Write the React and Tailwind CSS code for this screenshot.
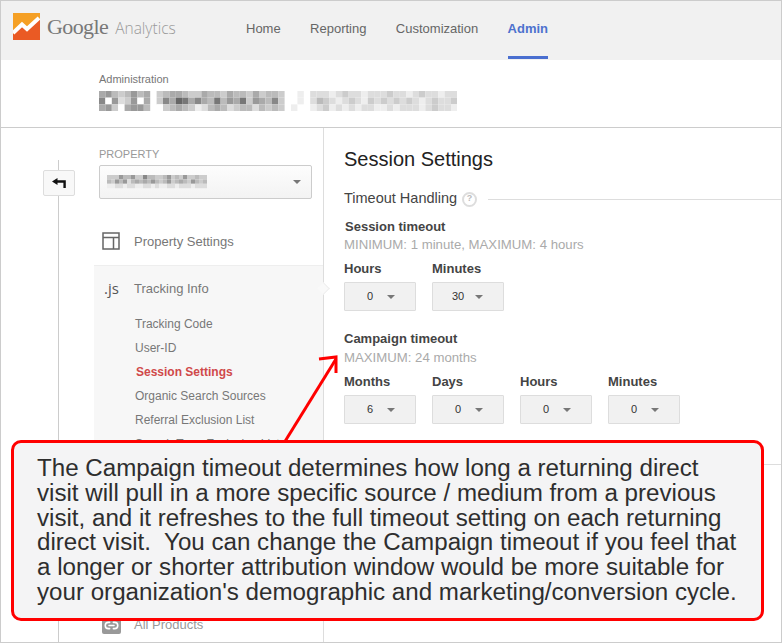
import React from 'react';
import { Link2 } from 'lucide-react';

// pixelated account name, one string of grey levels per row
const titleMosaic = [
  'a9bcb9ba cbaabccabbcabbcacbbc  e dddedcddedddcddedcddedd',
  '8f9dc9fa c8a67a8ab7b9a7c9ab8c  e dbcdedcdecdcdcdcdedcddc',
  'a9cfa99b fcbabcedbabdcbbdbcbc e  edcedededdeededddedcdde',
];

const propertyMosaic = [
  'ccc9bb9cc8bbccb9cbc9ccbcc',
  'bc9b9dbabab9bcb9cbabc9bcb',
  'eeddeddeeddedeeddedddeddd',
];

function Mosaic({ rows, cellW, cellH, className }) {
  const width = rows[0].length * cellW;
  const height = rows.length * cellH;
  return (
    <svg width={width} height={height} className={className}>
      {rows.map((row, r) =>
        row.split('').map((c, i) =>
          c === ' ' ? null : (
            <rect key={r + '-' + i} x={i * cellW} y={r * cellH} width={cellW} height={cellH} fill={'#' + c + c + c + c + c + c} />
          )
        )
      )}
    </svg>
  );
}

function Caret({ className = '' }) {
  return <span className={'w-0 h-0 border-x-[4px] border-x-transparent border-t-[4px] border-t-[#777] ' + className} />;
}

function Stepper({ label, value }) {
  return (
    <div className="w-[72px]">
      <div className="text-[13px] leading-[15px] font-bold text-[#444]">{label}</div>
      <div className="mt-[6px] h-[29px] bg-[#f1f1f1] border border-[#ddd] rounded-[1px] flex items-center">
        <span className="w-[50px] text-center text-[11px] text-[#333]">{value}</span>
        <Caret className="-ml-[8px]" />
      </div>
    </div>
  );
}

function SubLink({ children, active }) {
  return (
    <div className={'h-[24px] leading-[24px] text-[12px] ' + (active ? 'font-bold text-[#d0494a] pl-px' : 'text-[#777]')}>
      {children}
    </div>
  );
}

export default function App() {
  return (
    <div className="relative w-[782px] h-[643px] overflow-hidden bg-white border border-[#ccc] font-['Liberation_Sans',Arial,sans-serif]">
      {/* Top nav */}
      <header className="h-[58px] bg-[#f1f1f1] flex">
        <div className="flex items-start w-[245px] pl-[12px] pt-[12px]">
          <svg width="27" height="27" viewBox="0 0 27 27" className="shrink-0">
            <rect width="27" height="27" fill="#f5a025" />
            <path d="M0 27V21L9 13L14 18L27 6V27Z" fill="#ea5a24" />
            <path d="M0 20L9 11.5L14 16L26 5" fill="none" stroke="#fff" strokeWidth="4" />
          </svg>
          <span className="ml-[7px] -mt-[1px] text-[22px] leading-[30px] text-[#787878] font-['Liberation_Serif',serif] tracking-[-0.6px]">Google</span>
          <span className="ml-[7px] mt-[3px] text-[15.5px] leading-[24px] text-[#9a9a9a] font-['Open_Sans',sans-serif] font-light">Analytics</span>
        </div>
        <nav className="flex gap-[29.4px] text-[13px] text-[#666]">
          <a className="pt-[18px]">Home</a>
          <a className="pt-[18px]">Reporting</a>
          <a className="pt-[18px]">Customization</a>
          <a className="pt-[18px] font-bold text-[#4d72ce] border-b-[3px] border-[#4a6fd0]">Admin</a>
        </nav>
      </header>

      {/* Admin title */}
      <div className="h-[69px] border-t border-[#f1f1f1] border-b border-b-[#ccc] pl-[98px] pt-[13px]">
        <div className="text-[11px] leading-[13px] text-[#777]">Administration</div>
        <div className="mt-[5px] flex">
          <Mosaic rows={titleMosaic} cellW={6.4} cellH={6.67} className="blur-[0.6px]" />
        </div>
      </div>

      <div className="flex h-[514px]">
        {/* Back button rail */}
        <div className="relative w-[93px] shrink-0">
          <div className="absolute left-[57px] top-[32px] bottom-0 w-px bg-[#ccc]" />
          <button className="absolute left-[42px] top-[42px] w-[32px] h-[26px] bg-[#f8f8f8] border border-[#ddd] rounded-[2px] flex items-center justify-center">
            <svg width="14" height="10" viewBox="0 0 14 10">
              <path d="M0 3.5L5.5 0V2.2H13.8V10H11.4V4.8H5.5V7Z" fill="#111" />
            </svg>
          </button>
        </div>

        {/* Sidebar */}
        <aside className="w-[230px] shrink-0 border-r border-[#ddd] flex flex-col">
          <div className="pl-[5px] pr-[11px] pt-[20px]">
            <div className="text-[11px] leading-[13px] text-[#999]">PROPERTY</div>
            <div className="mt-[4px] h-[34px] bg-gradient-to-b from-[#fdfdfd] to-[#f3f3f3] border border-[#ccc] rounded-[2px] flex items-center justify-between pl-[7px] pr-[10px]">
              <Mosaic rows={propertyMosaic} cellW={4} cellH={4.4} className="blur-[0.5px]" />
              <Caret className="border-x-[3.5px] border-t-[#444]" />
            </div>
          </div>

          <div className="h-[66px] flex items-end pb-[15px] pl-[8px] text-[13px] text-[#777]">
            <svg width="18" height="18" viewBox="0 0 18 18" className="shrink-0" fill="none" stroke="#666" strokeWidth="1.5">
              <rect x="1" y="1" width="16" height="16" />
              <path d="M1 5.5H17M11.5 5.5V17" />
            </svg>
            <span className="ml-[14px] leading-[17px]">Property Settings</span>
          </div>

          <div className="relative flex-1 bg-[#f7f7f7] border-t border-[#eee]">
            <div className="absolute right-[-5px] top-[18px] w-[9px] h-[9px] rotate-45 bg-[#f9f9f9] border-t border-r border-[#eee]" />
            <div className="flex items-center h-[45px] pl-[10px] text-[13px] text-[#777]">
              <span className="w-[30px] text-[15px] text-[#555] font-['Open_Sans',sans-serif]">.js</span>
              <span>Tracking Info</span>
            </div>
            <div className="pl-[41px] pt-[1px]">
              <SubLink>Tracking Code</SubLink>
              <SubLink>User-ID</SubLink>
              <SubLink active>Session Settings</SubLink>
              <SubLink>Organic Search Sources</SubLink>
              <SubLink>Referral Exclusion List</SubLink>
              <SubLink>Search Term Exclusion List</SubLink>
            </div>
          </div>

          <div className="h-[34px] bg-white flex items-start pl-[8px] pt-[8px] text-[13px] text-[#999]">
            <span className="w-[19px] h-[17px] mt-[1px] rounded-[2px] bg-[#999] flex items-center justify-center">
              <Link2 size={15} color="#fff" strokeWidth={2.5} />
            </span>
            <span className="ml-[13px] leading-[18px]">All Products</span>
          </div>
        </aside>

        {/* Main settings */}
        <main className="flex-1 pl-[20px] pt-[20px]">
          <h1 className="text-[20px] leading-[23px] text-[#222]">Session Settings</h1>
          <div className="mt-[18px] flex items-center h-[20px]">
            <span className="text-[14.5px] text-[#444]">Timeout Handling</span>
            <span className="ml-[5px] w-[15px] h-[15px] rounded-full border-2 border-[#ddd] text-[#bbb] text-[9px] font-bold flex items-center justify-center">?</span>
            <span className="ml-[11px] flex-1 h-px bg-[#ddd]" />
          </div>
          <div className="ml-px mt-[10px] text-[13px] leading-[16px] font-bold text-[#444]">Session timeout</div>
          <div className="mt-[2px] text-[13.2px] leading-[16px] text-[#aaa]">MINIMUM: 1 minute, MAXIMUM: 4 hours</div>
          <div className="mt-[8px] flex gap-[16px]">
            <Stepper label="Hours" value="0" />
            <Stepper label="Minutes" value="30" />
          </div>
          <div className="mt-[20px] text-[13px] leading-[16px] font-bold text-[#444]">Campaign timeout</div>
          <div className="mt-[3px] text-[13.2px] leading-[16px] text-[#aaa]">MAXIMUM: 24 months</div>
          <div className="mt-[8px] flex gap-[16px]">
            <Stepper label="Months" value="6" />
            <Stepper label="Days" value="0" />
            <Stepper label="Hours" value="0" />
            <Stepper label="Minutes" value="0" />
          </div>
          <div className="mt-[40px] h-px bg-[#ddd]" />
        </main>
      </div>

      {/* Annotation overlay */}
      <svg className="absolute left-[270px] top-[345px]" width="80" height="100" viewBox="0 0 80 100" fill="none" stroke="#f00" strokeWidth="3">
        <path d="M13 97L65 13" />
        <path d="M48 13L65 11L65 27" />
      </svg>
      <div className="absolute left-[10px] top-[439px] w-[753px] h-[181px] bg-[#f4f4f5] border-[3px] border-[#f00] rounded-[10px] pl-[23px] pt-[13px] text-[24.15px] leading-[24.8px] text-[#2e2e2e] whitespace-pre">
        {"The Campaign timeout determines how long a returning direct\nvisit will pull in a more specific source / medium from a previous\nvisit, and it refreshes to the full timeout setting on each returning\ndirect visit.  You can change the Campaign timeout if you feel that\na longer or shorter attribution window would be more suitable for\nyour organization's demographic and marketing/conversion cycle."}
      </div>
    </div>
  );
}
